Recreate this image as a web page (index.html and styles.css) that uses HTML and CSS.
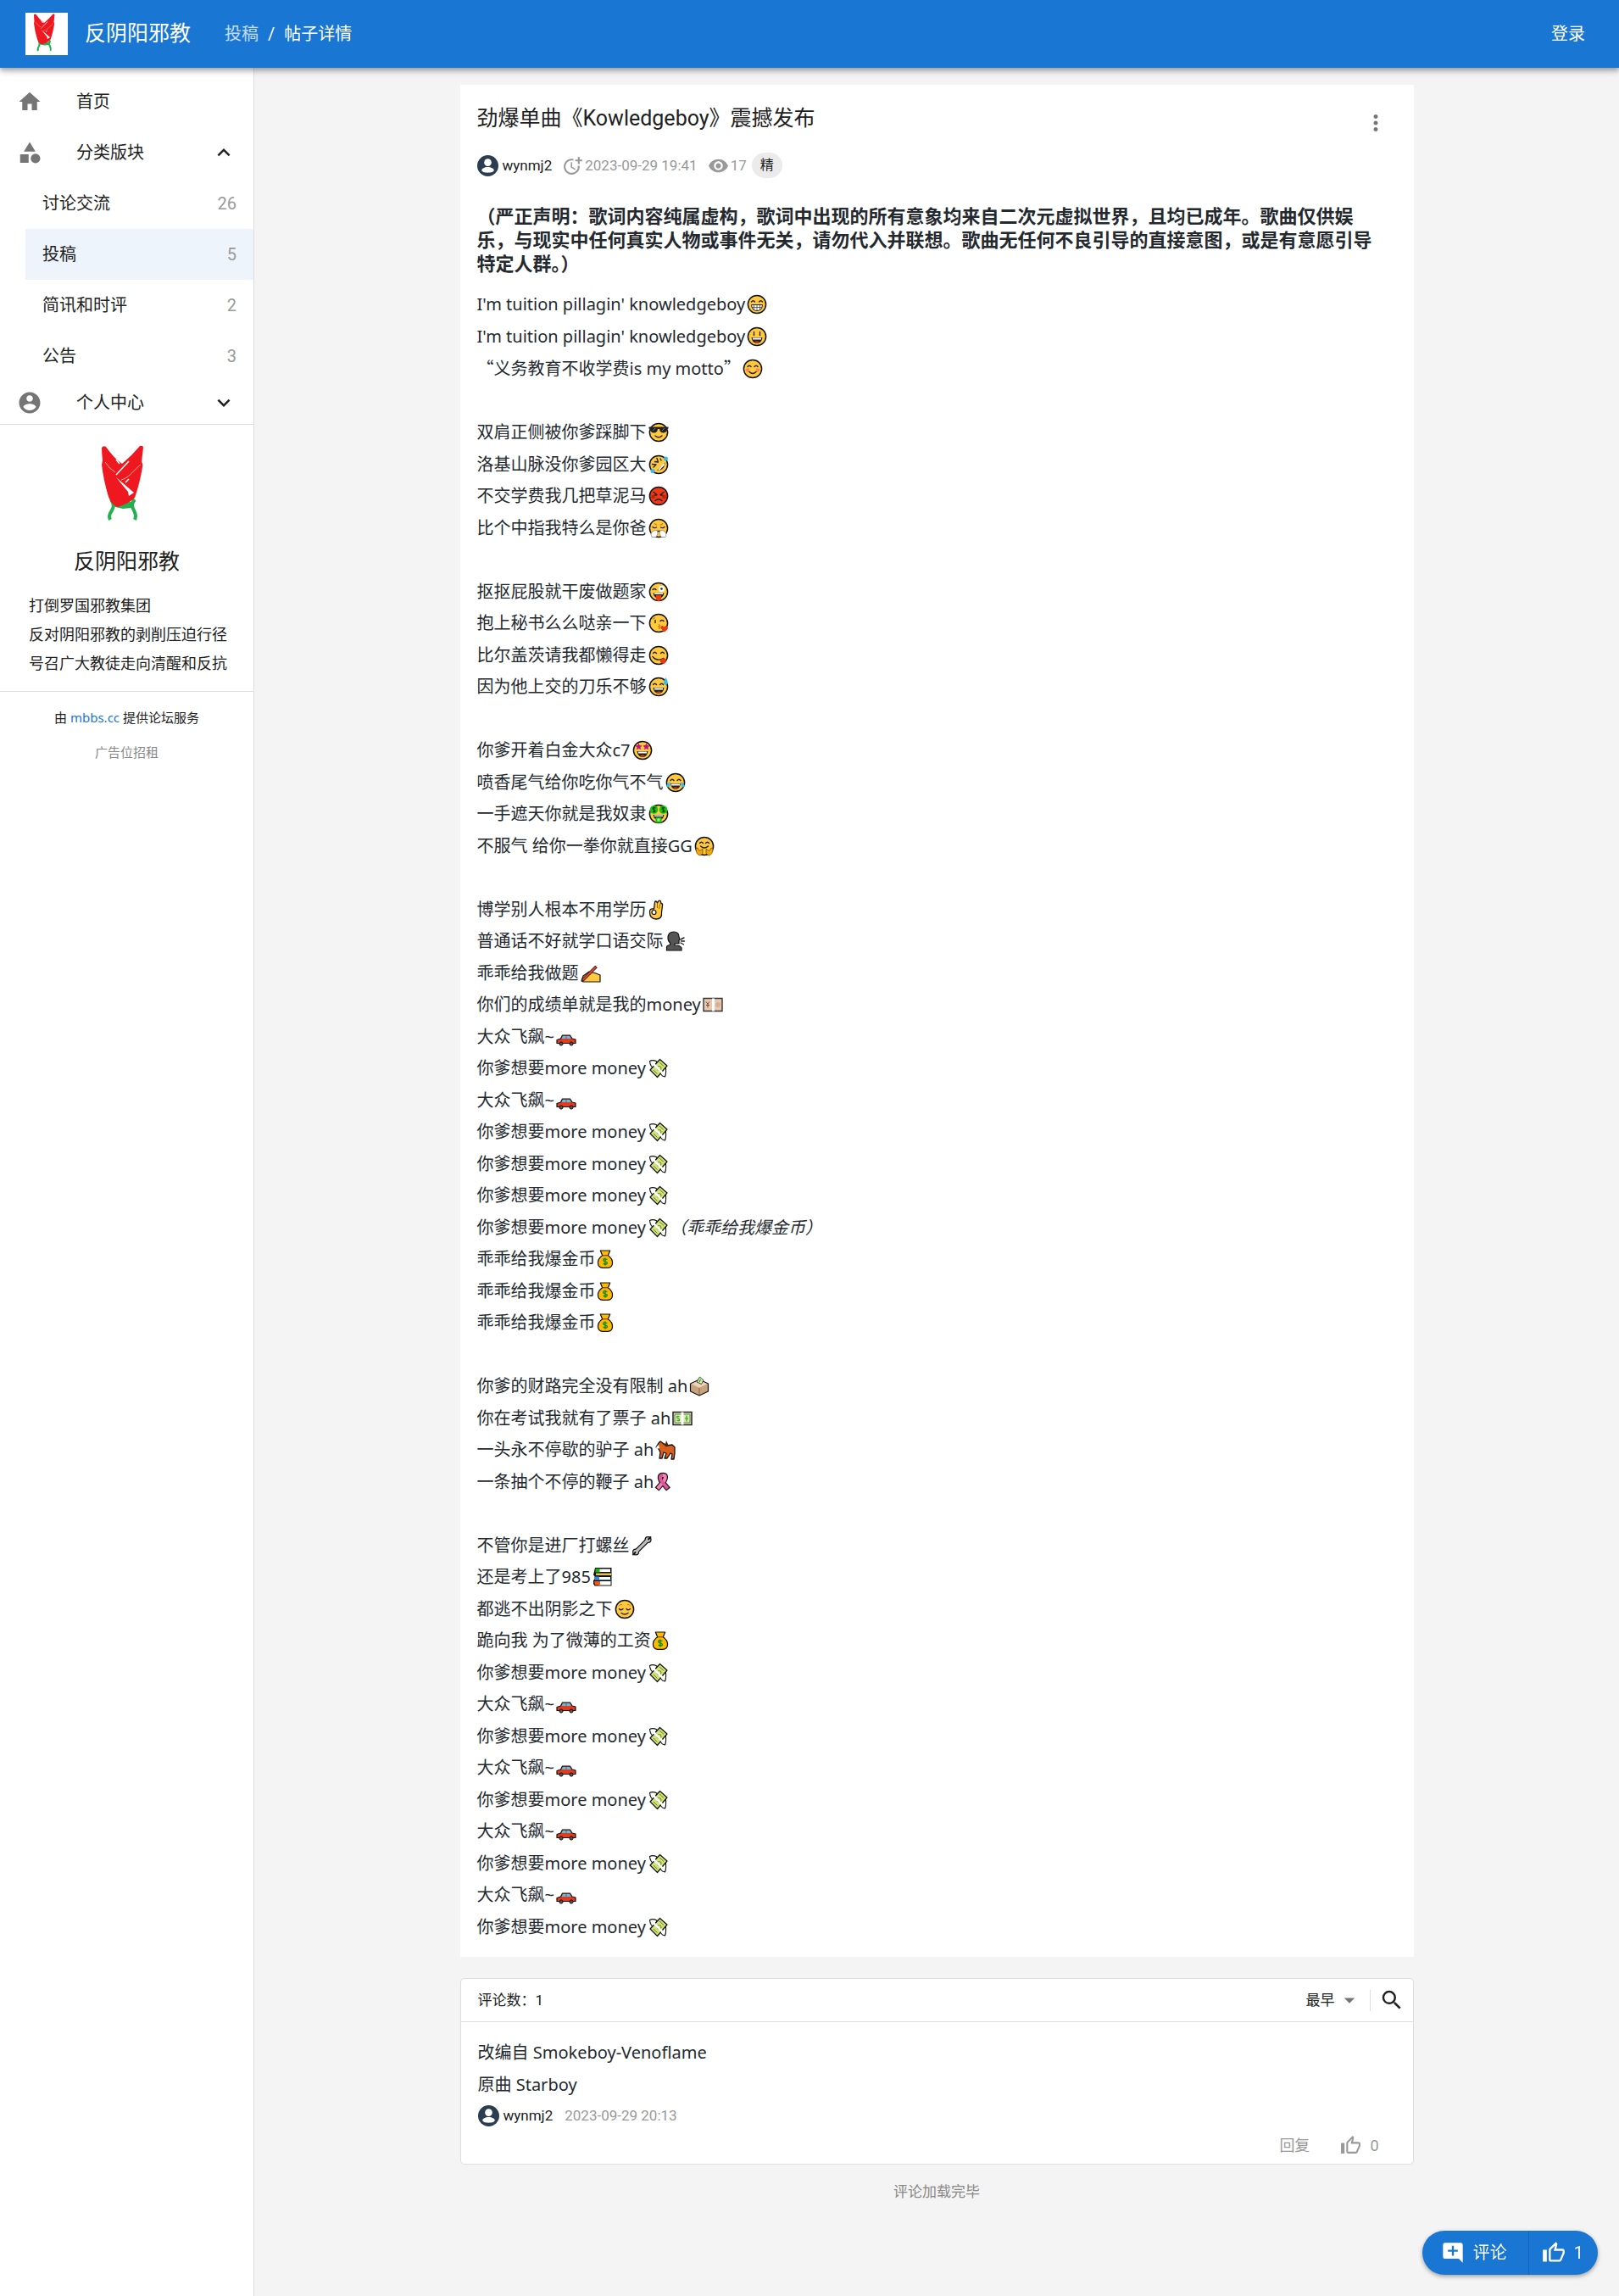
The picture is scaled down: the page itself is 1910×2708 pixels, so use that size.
FILE: index.html
```html
<!DOCTYPE html>
<html lang="zh-CN">
<head>
<meta charset="utf-8">
<meta name="viewport" content="width=device-width, initial-scale=1">
<title>劲爆单曲《Kowledgeboy》震撼发布 - 反阴阳邪教</title>
<link rel="stylesheet" href="styles.css">
</head>
<body>
<svg class="sprite" aria-hidden="true">
  <defs>
    <symbol id="logo" viewBox="0 0 100 100">
      <path fill="none" stroke="#22b14c" stroke-width="4" d="M31 66c3 5 4 8 1 13-3 4-4 7-2 11M59 66c-4 4-4 8-1 13 2 4 3 7 1 11"/>
      <path fill="#22b14c" d="M32 72l28-4-5 8-10 1-9-2z"/>
      <path fill="#f01820" d="M20 5q2-3 5-1 9 13 19 20Q55 15 65 3q4-1 4 2l-2 17q2 2 1 6-3 18-8 33-1 7-21 14-7-2-11-12Q22 43 20 25l1-5Q20 12 20 5z"/>
      <path fill="none" stroke="#fff" stroke-width="1.500" d="M52 21L37 37M37 19l4 5M48 46l4-4"/>
      <path fill="none" stroke="#fca" stroke-width=".8" d="M66 25C58 31 52 41 43 43M24 22q5 8 12 12"/>
      <path fill="#fff" d="M37 40l21 18-6 4-1-5z"/>
    </symbol>
    <symbol id="i-home" viewBox="0 0 24 24"><path d="M10 20v-6h4v6h5v-8h3L12 3 2 12h3v8z"/></symbol>
    <symbol id="i-category" viewBox="0 0 24 24"><path d="M12 2l-5.500 9h11zM3 13.500h8v8H3z"/><circle cx="17.500" cy="17.500" r="4.500"/></symbol>
    <symbol id="i-account" viewBox="0 0 24 24"><path d="M12 2C6.480 2 2 6.480 2 12s4.480 10 10 10 10-4.480 10-10S17.520 2 12 2zm0 3c1.660 0 3 1.340 3 3s-1.340 3-3 3-3-1.340-3-3 1.340-3 3-3zm0 14.200c-2.500 0-4.710-1.280-6-3.220.03-1.990 4-3.080 6-3.080 1.990 0 5.970 1.090 6 3.080-1.290 1.940-3.500 3.220-6 3.220z"/></symbol>
    <symbol id="i-less" viewBox="0 0 24 24"><path d="M12 8l-6 6 1.410 1.410L12 10.830l4.590 4.580L18 14z"/></symbol>
    <symbol id="i-more" viewBox="0 0 24 24"><path d="M16.590 8.590L12 13.170 7.410 8.590 6 10l6 6 6-6z"/></symbol>
    <symbol id="i-dots" viewBox="0 0 24 24"><path d="M12 8c1.100 0 2-.9 2-2s-.9-2-2-2-2 .9-2 2 .9 2 2 2zm0 2c-1.100 0-2 .9-2 2s.9 2 2 2 2-.9 2-2-.9-2-2-2zm0 6c-1.100 0-2 .9-2 2s.9 2 2 2 2-.9 2-2-.9-2-2-2z"/></symbol>
    <symbol id="i-moretime" viewBox="0 0 24 24"><path d="M10 8v6l4.700 2.900.8-1.200-4-2.400V8z"/><path d="M17.920 12A6.957 6.957 0 0 1 11 20c-3.900 0-7-3.100-7-7s3.100-7 7-7c.7 0 1.370.1 2 .29V4.230c-.64-.15-1.310-.23-2-.23-5 0-9 4-9 9s4 9 9 9a8.963 8.963 0 0 0 8.940-10z"/><path d="M20 5V2h-2v3h-3v2h3v3h2V7h3V5z"/></symbol>
    <symbol id="i-eye" viewBox="0 0 24 24"><path d="M12 4.500C7 4.500 2.730 7.610 1 12c1.730 4.390 6 7.500 11 7.500s9.270-3.110 11-7.500c-1.730-4.390-6-7.500-11-7.500zM12 17c-2.760 0-5-2.240-5-5s2.240-5 5-5 5 2.240 5 5-2.240 5-5 5zm0-8c-1.660 0-3 1.340-3 3s1.340 3 3 3 3-1.340 3-3-1.340-3-3-3z"/></symbol>
    <symbol id="i-arrow" viewBox="0 0 24 24"><path d="M7 10l5 5 5-5z"/></symbol>
    <symbol id="i-search" viewBox="0 0 24 24"><path d="M15.500 14h-.79l-.28-.27A6.471 6.471 0 0 0 16 9.500 6.500 6.500 0 1 0 9.500 16c1.610 0 3.090-.59 4.230-1.570l.27.28v.79l5 4.990L20.490 19l-4.990-5zm-6 0C7.010 14 5 11.990 5 9.500S7.010 5 9.500 5 14 7.010 14 9.500 11.990 14 9.500 14z"/></symbol>
    <symbol id="i-like" viewBox="0 0 24 24"><path d="M9 21h9c.83 0 1.540-.5 1.840-1.220l3.020-7.050c.09-.23.14-.47.14-.73v-2c0-1.100-.9-2-2-2h-6.310l.95-4.570.03-.32c0-.41-.17-.79-.44-1.060L14.170 1 7.580 7.590C7.220 7.950 7 8.450 7 9v10c0 1.100.9 2 2 2zM9 9l4.340-4.340L12 10h9v2l-3 7H9V9zM1 9h4v12H1z"/></symbol>
    <symbol id="i-addcomment" viewBox="0 0 24 24"><path d="M22 4c0-1.100-.9-2-2-2H4c-1.100 0-2 .9-2 2v12c0 1.100.9 2 2 2h14l4 4V4zm-5 7h-4v4h-2v-4H7V9h4V5h2v4h4v2z"/></symbol>
    <symbol id="avatar" viewBox="0 0 26 26"><circle cx="13" cy="13" r="13" fill="#2b3e51"/><circle cx="13" cy="9" r="4.500" fill="#fff"/><path fill="#fff" d="M13 14.500c4 0 7.500 1.800 7.500 4S17 21.500 13 21.500s-7.500-.8-7.500-3 3.500-4 7.500-4z"/></symbol>

    <symbol id="face" viewBox="0 0 24 24"><circle cx="12" cy="12" r="10.600" fill="#ffc83d" stroke="#111" stroke-width="1.500"/></symbol>
    <symbol id="e-grin" viewBox="0 0 24 24"><use href="#face"/><path class="ln" d="M5.500 9q2-2.500 4 0M14.500 9q2-2.500 4 0"/><path fill="#fff" stroke="#222" d="M5.500 12.500h13q-.5 7-6.500 7t-6.500-7z"/><path stroke="#444" stroke-width=".8" d="M6 15.500h12M8.500 13v5M12 13v6.500M15.500 13v5"/></symbol>
    <symbol id="e-smile" viewBox="0 0 24 24"><use href="#face"/><path class="ln" d="M8.500 6.500v4M15.500 6.500v4"/><path fill="#222" d="M5.500 13h13q-1 7-6.500 7t-6.500-7z"/><path fill="#fff" d="M7 13.500h10v2H7z"/><path fill="#f03a17" d="M9 18.500q3-2 6 0-3 2-6 0z"/></symbol>
    <symbol id="e-blush" viewBox="0 0 24 24"><use href="#face"/><circle cx="6" cy="13.500" r="2.300" fill="#ff8a50"/><circle cx="18" cy="13.500" r="2.300" fill="#ff8a50"/><path class="ln" d="M6 9.500q2-2.500 4 0M14 9.500q2-2.500 4 0M8 15.500q4 4 8 0"/></symbol>
    <symbol id="e-cool" viewBox="0 0 24 24"><use href="#face"/><path fill="#222" d="M.5 5.500h23v2l-1.500.5q-.5 4.500-4.500 4.500T13 8h-2q-.5 4.500-4.500 4.500T2 8L.5 7.500z"/><path stroke="#777" d="M5 10l3-3M16 10l3-3"/><path class="ln" d="M8 16q4 3.500 8 0"/></symbol>
    <symbol id="e-rofl" viewBox="0 0 24 24"><use href="#face"/><path class="ln" d="M10 4.500l1.500 4.500-4-.5M4.500 11.500l4.500.5-3 3M14 5l1 2"/><path fill="#222" d="M19.500 9.500q.5 9-9.500 9.500z"/><path fill="#fff" d="M18.500 10l.5 2.500-6 6-2-.3z"/><path fill="#f03a17" d="M17.500 16.500q-3-.5-3.500 2 2.500-.3 3.500-2z"/><circle cx="5" cy="19.500" r="2.500" fill="#36bdf0"/><circle cx="20.500" cy="5" r="2.500" fill="#36bdf0"/></symbol>
    <symbol id="e-rage" viewBox="0 0 24 24"><circle cx="12" cy="12" r="10.600" fill="#f03a17" stroke="#111" stroke-width="1.500"/><circle cx="5.500" cy="13" r="2.300" fill="#b8240b"/><circle cx="18.500" cy="13" r="2.300" fill="#b8240b"/><path class="ln" d="M6 7.500l4 3M18 7.500l-4 3M7.500 11h2M14.500 11h2M8 17.500q4-3.500 8 0"/></symbol>
    <symbol id="e-triumph" viewBox="0 0 24 24"><use href="#face"/><path class="ln" d="M5 10.500q2 2 4.500.5M19 10.500q-2 2-4.500.5M10 15.500h4"/><path stroke="#c47a10" fill="none" stroke-width="1.300" d="M7 6.500l3 2M17 6.500l-3 2"/><path fill="#fff" stroke="#555" stroke-width=".5" d="M10.500 15Q7 13.500 4 16.500 2 19 4 22.500h5q3-4 1.500-7.500zM13.500 15q3.500-1.500 6.500 1.500 2 2.500 0 6h-5q-3-4-1.500-7.500z"/></symbol>
    <symbol id="e-tongue" viewBox="0 0 24 24"><use href="#face"/><circle cx="15.500" cy="8.500" r="3.700" fill="#fff"/><circle cx="15.500" cy="8.500" r="1.300" fill="#222"/><path class="ln" d="M5 9.500q2-2 4 0"/><path fill="#222" d="M5.500 13.500h13q-1 6-6.500 6t-6.500-6z"/><path fill="#fff" d="M7 13.500h10v1.500H7z"/><path fill="#f03a17" d="M9 16h6v5q-3 4-6 0z"/></symbol>
    <symbol id="e-kiss" viewBox="0 0 24 24"><use href="#face"/><path class="ln" d="M8 8.500v3M14 9.500q2-2 4 0"/><path stroke="#c47a10" fill="none" stroke-width="1.200" d="M5 7.500q1-2 3-1.500M12 13.500q3 1.500 0 2.500 3 1.500 0 2.500"/><path fill="#f03a17" d="M19 22.500l-4.500-4.500q-.5-3 2-3l2 1.500q3-2.500 4.500.5.500 2-4 5.500z"/></symbol>
    <symbol id="e-yum" viewBox="0 0 24 24"><use href="#face"/><path class="ln" d="M5.500 9.500q2-2.500 4 0M14.500 9.500q2-2.500 4 0M5 13.500q5 6 13 2"/><path fill="#f03a17" d="M14 17l5-2q3 3 1 6-3 2-6-1z"/></symbol>
    <symbol id="e-sweat" viewBox="0 0 24 24"><use href="#face"/><path class="ln" d="M5.500 9.500q2-2.500 4 0M13.500 9.500q2-2.500 4 0"/><path fill="#222" d="M5.500 13h13q-1 7-6.500 7t-6.500-7z"/><path fill="#fff" d="M7 13.500h10v2H7z"/><path fill="#f03a17" d="M9 18.500q3-2 6 0-3 2-6 0z"/><path fill="#36bdf0" d="M20.500 1q3.500 6 1.500 8-2.500 1.500-4-.5-.5-2.500 2.500-7.500z"/></symbol>
    <symbol id="e-star" viewBox="0 0 24 24"><use href="#face"/><path id="st" fill="#c2108c" d="M7.500 3.500l1.200 2.600 2.800.3-2 2 .5 2.900-2.500-1.500L5 11.300l.5-2.900-2-2 2.800-.3z"/><use href="#st" x="9"/><path fill="#222" d="M5.500 13h13q-1 7-6.500 7t-6.500-7z"/><path fill="#fff" d="M7 13.500h10v2H7z"/><path fill="#f03a17" d="M9 18.500q3-2 6 0-3 2-6 0z"/></symbol>
    <symbol id="e-joy" viewBox="0 0 24 24"><use href="#face"/><path class="ln" d="M6 9.500q2-2.500 4 0M14 9.500q2-2.500 4 0"/><path fill="#222" d="M6 13h12q-1 7-6 7t-6-7z"/><path fill="#fff" d="M7 13.500h10v2H7z"/><path fill="#f03a17" d="M9 18.500q3-2 6 0-3 2-6 0z"/><path fill="#36bdf0" d="M5.500 11Q6 18 2.500 17.500-1 16 5.500 11zM18.500 11q-.5 7 3 6.500 3.500-1.500-3-6.500z"/></symbol>
    <symbol id="e-money" viewBox="0 0 24 24"><use href="#face"/><circle cx="6.500" cy="7" r="4.800" fill="#16c60c"/><circle cx="17.500" cy="7" r="4.800" fill="#16c60c"/><path id="dl" fill="none" stroke="#134d0e" stroke-width="1.100" d="M8.500 5q-3.500-1.500-3.500.5 0 1 1.500 1.500t1.500 1.500q0 2-3 .5M6.500 3.500v7"/><use href="#dl" x="11"/><path fill="#222" d="M5.500 13h13q-1 6-6.500 6t-6.500-6z"/><path fill="#fff" d="M7 13.500h10v1.500H7z"/><path fill="#16c60c" d="M8.500 16h7v6.500h-7z"/><path fill="#b8f0b0" d="M10.500 17.500h3v3h-3z"/></symbol>
    <symbol id="e-hug" viewBox="0 0 24 24"><use href="#face"/><path class="ln" d="M6.500 8.500q2-2.500 4 0M13.500 8.500q2-2.500 4 0M7.500 12q4.500 4 9 0"/><path fill="#f5a60a" stroke="#6b4300" stroke-width=".7" d="M2 15l2-1 2 3.500 4-2v5l-3 2.500Q2 22 2 15zM22 15l-2-1-2 3.500-4-2v5l3 2.500q5-1 5-8z"/></symbol>
    <symbol id="e-relieved" viewBox="0 0 24 24"><use href="#face"/><path class="ln" d="M5.500 11.500q2 2.500 4.500 0M14 11.500q2 2.500 4.500 0M8 16.500q4 3 8 0"/><path fill="none" stroke="#c47a10" d="M5 8.500q1.500-2.500 4-2M19 8.500q-1.500-2.500-4-2"/></symbol>
    <symbol id="e-ok" viewBox="0 0 18 24"><path fill="#ffc83d" stroke="#111" stroke-width="1.300" stroke-linejoin="round" d="M6.500 11L7.500 3q1-2 2.500 0l.5 1L12 1.500q2-1 2.500 1l.5 2q2 0 1.500 2.500L15.500 15q1 8-6.500 8-7.500-.5-7.500-8-.5-5 5-4z"/><path stroke="#8a5a00" stroke-width=".9" d="M10.500 4v6M14 4.500L12.500 11"/><circle cx="6.500" cy="15" r="2.500" fill="#fff" stroke="#111" stroke-width="1.200"/></symbol>
    <symbol id="e-speak" viewBox="0 0 24 24"><path fill="#555" stroke="#111" stroke-width="1.200" d="M1.500 23v-4q0-2 4-2.500V14Q3 12 3 8q0-7 7-7 6 0 6 6l1 3-1 1v4h-5v2q7 0 8 3v3z"/><path class="ln" d="M18 10l4-2M18.500 12h4M18 14l3.500 2"/></symbol>
    <symbol id="e-write" viewBox="0 0 24 24"><path fill="#ffc83d" stroke="#111" stroke-width="1.200" stroke-linejoin="round" d="M1 21l2-6 7-5 8 2 5 2v8H3z"/><path stroke="#111" stroke-width="3.600" d="M2 20.500L18.500 4"/><path stroke="#e8452c" stroke-width="2.200" d="M2.500 20L18 4.500"/></symbol>
    <symbol id="e-yen" viewBox="0 0 24 24"><path fill="#e8c9b0" stroke="#333" stroke-width="1.400" d="M1 4.500h22v15H1z"/><path fill="#fff" d="M11 4.500h3v15h-3z"/><path fill="none" stroke="#6b4a3a" stroke-width="1" d="M4 8.500l2 2.500 2-2.500M6 11v4.500M4 12.500h4"/><circle cx="18" cy="12" r="3" fill="#d9b095"/></symbol>
    <symbol id="e-car" viewBox="0 0 24 24"><path fill="#e8391b" stroke="#111" stroke-width="1.200" stroke-linejoin="round" d="M1 15.500l4.500-1.500 2-4h9l2.500 4 4 1v4.500H1z"/><path fill="#47c7f2" d="M6.500 14l1.500-3h3.500v3zM12.500 11h3.700l1.500 3h-5.200z"/><circle cx="6" cy="20" r="2.100" fill="#555" stroke="#111"/><circle cx="18" cy="20" r="2.100" fill="#555" stroke="#111"/></symbol>
    <symbol id="e-wings" viewBox="0 0 24 24"><path fill="#fff" stroke="#111" stroke-width="1.100" stroke-linejoin="round" d="M2.500 3.500Q6 1.500 11 4l-3 9q-5-3-5.500-9.500zM14 17q4 0 7-8 1.500 8-.5 13l-3-1z"/><path fill="#cfe37a" stroke="#111" stroke-width="1.200" stroke-linejoin="round" d="M14.500 1.500L23 9 11.500 22.500 3 14z"/><path fill="none" stroke="#6b8020" stroke-width="1" d="M14 5l5 4.500M7 14l4.500 4.500"/><circle cx="13.500" cy="12" r="2.500" fill="none" stroke="#6b8020"/><path stroke="#fff" stroke-width="2.600" d="M6.500 6.500L18 18"/></symbol>
    <symbol id="e-bag" viewBox="0 0 21 24"><path fill="#ffb900" stroke="#111" stroke-width="1.300" stroke-linejoin="round" d="M4.500 1.500h12l-2.500 6q5.500 4 5.500 9 0 6-6 6.500h-6q-6-.5-6-6.500 0-5 5.500-9z"/><path stroke="#7a4a00" stroke-width="1.300" d="M7 7.500h7"/><path fill="none" stroke="#0f8f10" stroke-width="1.500" d="M13 12.500q-5-2-5 .7 0 1.200 2.500 1.800 2.500.6 2.500 1.800 0 2.700-5 .7M10.500 10.500v9.500"/></symbol>
    <symbol id="e-ballot" viewBox="0 0 24 24"><path fill="#c9a27e" stroke="#111" stroke-width="1.200" stroke-linejoin="round" d="M1.500 9L12 4l10.500 5v9L12 23 1.500 18z"/><path fill="#ecd3b8" d="M2.500 9.300L12 5l9.500 4.300L12 13.700z"/><path stroke="#8a6545" d="M12 14v8"/><path fill="#d9efb0" stroke="#333" stroke-width=".9" d="M9 7l3.500-6L17 5l-2.500 4.500z"/><path stroke="#16a010" stroke-width="1.200" d="M12 7l1.500-3"/></symbol>
    <symbol id="e-dollar" viewBox="0 0 24 24"><path fill="#d5eab0" stroke="#222" stroke-width="1.500" d="M1 4.500h22v15H1z"/><path fill="none" stroke="#6d7f55" d="M3 7h18v10H3z"/><path fill="#fff" d="M10.500 4.500h3v15h-3z"/><path fill="none" stroke="#3a9d20" stroke-width="1.200" d="M8.500 10q-3-1.500-3 .5 0 1 1.500 1.500t1.500 1.500q0 2-3 .5M17 8.500v7M15 12h4"/></symbol>
    <symbol id="e-horse" viewBox="0 0 24 24"><path fill="#d95f1e" stroke="#111" stroke-width="1.300" stroke-linejoin="round" d="M1 9l3-5 2-2 3 2 5 3 6-1 3 3v7l-1 7h-3l1-6-2-1-4 6h-3l2-6-3-1-2 7H5l1-7-2-4z"/><path fill="#4a2410" d="M7 3.500l5 1.500 1-4 2.500 5.500L13 8.500z"/><path fill="#fff" d="M1 9l3-3 1 4-3 1z"/></symbol>
    <symbol id="e-ribbon" viewBox="0 0 20 24"><path fill="none" stroke="#111" stroke-width="6.400" d="M3 20.500l8.500-10Q15 4 10 4T8 10.500l8.500 10"/><path fill="none" stroke="#f283b6" stroke-width="4" d="M3.800 19.600l7.700-9.100Q15 4 10 4"/><path fill="none" stroke="#e0569b" stroke-width="4" d="M10 4Q5 4 8 10.500l7.700 9.100"/></symbol>
    <symbol id="e-wrench" viewBox="0 0 24 24"><g fill="none" stroke-linecap="round"><path stroke="#111" stroke-width="5.600" d="M5 19.500L19 5.500"/><path stroke="#111" stroke-width="8" d="M5 19.500h.1M19.500 5h.1"/><path stroke="#bdbdbd" stroke-width="3.200" d="M5 19.500L19 5.500"/><path stroke="#bdbdbd" stroke-width="5.600" d="M5 19.500h.1M19.500 5h.1"/><path stroke="#111" stroke-width="1.800" d="M2 22.500l2.500-2.500M22.500 2L20 4.500"/></g></symbol>
    <symbol id="e-books" viewBox="0 0 24 24"><path fill="#111" d="M3 1h19.500v21.500H2.500L1 20v-4l1.500-1.500V11L1 9.500z"/><path fill="#fff" d="M8 2.500h13V6H8zM8 12h13v3H8zM7 17h14.500v4.500H7z"/><path fill="#16b010" d="M3.500 2h5v4.500h-5z"/><path fill="#e5c34b" d="M4 7.500h18v2.500H4z"/><path fill="#2f86e0" d="M3 11.500h5V15H22v.8H3z"/><path fill="#f05a10" d="M2 17h7v4.500H3z"/></symbol>
  </defs>
</svg>

<header class="topbar">
  <a class="topbar-brand" href="#"><span class="topbar-logo"><svg><use href="#logo"/></svg></span><span>反阴阳邪教</span></a>
  <nav class="crumbs" aria-label="面包屑"><a href="#">投稿</a><span>/</span><strong>帖子详情</strong></nav>
  <button class="login" type="button">登录</button>
</header>

<div class="layout">
  <aside class="sidebar">
    <nav class="menu">
      <a class="menu-item" href="#"><svg class="icon"><use href="#i-home"/></svg><span>首页</span></a>
      <button class="menu-item" type="button" aria-expanded="true"><svg class="icon"><use href="#i-category"/></svg><span>分类版块</span><svg class="icon chevron"><use href="#i-less"/></svg></button>
      <div class="submenu">
        <a href="#"><span>讨论交流</span><span class="count">26</span></a>
        <a href="#" class="active" aria-current="page"><span>投稿</span><span class="count">5</span></a>
        <a href="#"><span>简讯和时评</span><span class="count">2</span></a>
        <a href="#"><span>公告</span><span class="count">3</span></a>
      </div>
      <button class="menu-item compact" type="button" aria-expanded="false"><svg class="icon"><use href="#i-account"/></svg><span>个人中心</span><svg class="icon chevron"><use href="#i-more"/></svg></button>
    </nav>
    <section class="about">
      <svg class="about-logo"><use href="#logo"/></svg>
      <h2>反阴阳邪教</h2>
      <p>打倒罗国邪教集团<br>反对阴阳邪教的剥削压迫行径<br>号召广大教徒走向清醒和反抗</p>
    </section>
    <section class="powered">
      <p>由 <a href="#">mbbs.cc</a> 提供论坛服务</p>
      <p class="muted">广告位招租</p>
    </section>
  </aside>

  <main class="content">
    <article class="post">
      <div class="post-head">
        <h1>劲爆单曲《Kowledgeboy》震撼发布</h1>
        <button class="icon-button" type="button" aria-label="更多"><svg><use href="#i-dots"/></svg></button>
      </div>
      <div class="meta">
        <a class="user" href="#"><svg><use href="#avatar"/></svg>wynmj2</a>
        <span class="stat"><svg><use href="#i-moretime"/></svg>2023-09-29 19:41</span>
        <span class="stat views"><svg><use href="#i-eye"/></svg>17</span>
        <span class="chip">精</span>
      </div>
      <div class="markdown">
        <h3>（严正声明：歌词内容纯属虚构，歌词中出现的所有意象均来自二次元虚拟世界，且均已成年。歌曲仅供娱<br>乐，与现实中任何真实人物或事件无关，请勿代入并联想。歌曲无任何不良引导的直接意图，或是有意愿引导<br>特定人群。）</h3>
        <p>I'm tuition pillagin' knowledgeboy<svg class="emoji" role="img" aria-label="😁"><use href="#e-grin"/></svg><br>
        I'm tuition pillagin' knowledgeboy<svg class="emoji" role="img" aria-label="😃"><use href="#e-smile"/></svg><br>
        <span class="cjk">“义务教育不收学费</span>is my motto<span class="cjk">”</span><svg class="emoji" role="img" aria-label="😊"><use href="#e-blush"/></svg><br>
        <br>
        双肩正侧被你爹踩脚下<svg class="emoji" role="img" aria-label="😎"><use href="#e-cool"/></svg><br>
        洛基山脉没你爹园区大<svg class="emoji" role="img" aria-label="🤣"><use href="#e-rofl"/></svg><br>
        不交学费我几把草泥马<svg class="emoji" role="img" aria-label="😡"><use href="#e-rage"/></svg><br>
        比个中指我特么是你爸<svg class="emoji" role="img" aria-label="😤"><use href="#e-triumph"/></svg><br>
        <br>
        抠抠屁股就干废做题家<svg class="emoji" role="img" aria-label="😜"><use href="#e-tongue"/></svg><br>
        抱上秘书么么哒亲一下<svg class="emoji" role="img" aria-label="😘"><use href="#e-kiss"/></svg><br>
        比尔盖茨请我都懒得走<svg class="emoji" role="img" aria-label="😋"><use href="#e-yum"/></svg><br>
        因为他上交的刀乐不够<svg class="emoji" role="img" aria-label="😅"><use href="#e-sweat"/></svg><br>
        <br>
        你爹开着白金大众c7<svg class="emoji" role="img" aria-label="🤩"><use href="#e-star"/></svg><br>
        喷香尾气给你吃你气不气<svg class="emoji" role="img" aria-label="😂"><use href="#e-joy"/></svg><br>
        一手遮天你就是我奴隶<svg class="emoji" role="img" aria-label="🤑"><use href="#e-money"/></svg><br>
        不服气 给你一拳你就直接GG<svg class="emoji" role="img" aria-label="🤗"><use href="#e-hug"/></svg><br>
        <br>
        博学别人根本不用学历<svg class="emoji slim" role="img" aria-label="👌"><use href="#e-ok"/></svg><br>
        普通话不好就学口语交际<svg class="emoji" role="img" aria-label="🗣"><use href="#e-speak"/></svg><br>
        乖乖给我做题<svg class="emoji" role="img" aria-label="✍"><use href="#e-write"/></svg><br>
        你们的成绩单就是我的money<svg class="emoji" role="img" aria-label="💴"><use href="#e-yen"/></svg><br>
        大众飞飙~<svg class="emoji" role="img" aria-label="🚗"><use href="#e-car"/></svg><br>
        你爹想要more money<svg class="emoji" role="img" aria-label="💸"><use href="#e-wings"/></svg><br>
        大众飞飙~<svg class="emoji" role="img" aria-label="🚗"><use href="#e-car"/></svg><br>
        你爹想要more money<svg class="emoji" role="img" aria-label="💸"><use href="#e-wings"/></svg><br>
        你爹想要more money<svg class="emoji" role="img" aria-label="💸"><use href="#e-wings"/></svg><br>
        你爹想要more money<svg class="emoji" role="img" aria-label="💸"><use href="#e-wings"/></svg><br>
        你爹想要more money<svg class="emoji" role="img" aria-label="💸"><use href="#e-wings"/></svg><em>（乖乖给我爆金币）</em><br>
        乖乖给我爆金币<svg class="emoji slim" role="img" aria-label="💰"><use href="#e-bag"/></svg><br>
        乖乖给我爆金币<svg class="emoji slim" role="img" aria-label="💰"><use href="#e-bag"/></svg><br>
        乖乖给我爆金币<svg class="emoji slim" role="img" aria-label="💰"><use href="#e-bag"/></svg><br>
        <br>
        你爹的财路完全没有限制 ah<svg class="emoji" role="img" aria-label="🗳"><use href="#e-ballot"/></svg><br>
        你在考试我就有了票子 ah<svg class="emoji" role="img" aria-label="💵"><use href="#e-dollar"/></svg><br>
        一头永不停歇的驴子 ah<svg class="emoji" role="img" aria-label="🐎"><use href="#e-horse"/></svg><br>
        一条抽个不停的鞭子 ah<svg class="emoji slim" role="img" aria-label="🎗"><use href="#e-ribbon"/></svg><br>
        <br>
        不管你是进厂打螺丝<svg class="emoji" role="img" aria-label="🔧"><use href="#e-wrench"/></svg><br>
        还是考上了985<svg class="emoji" role="img" aria-label="📚"><use href="#e-books"/></svg><br>
        都逃不出阴影之下<svg class="emoji" role="img" aria-label="😌"><use href="#e-relieved"/></svg><br>
        跪向我 为了微薄的工资<svg class="emoji slim" role="img" aria-label="💰"><use href="#e-bag"/></svg><br>
        你爹想要more money<svg class="emoji" role="img" aria-label="💸"><use href="#e-wings"/></svg><br>
        大众飞飙~<svg class="emoji" role="img" aria-label="🚗"><use href="#e-car"/></svg><br>
        你爹想要more money<svg class="emoji" role="img" aria-label="💸"><use href="#e-wings"/></svg><br>
        大众飞飙~<svg class="emoji" role="img" aria-label="🚗"><use href="#e-car"/></svg><br>
        你爹想要more money<svg class="emoji" role="img" aria-label="💸"><use href="#e-wings"/></svg><br>
        大众飞飙~<svg class="emoji" role="img" aria-label="🚗"><use href="#e-car"/></svg><br>
        你爹想要more money<svg class="emoji" role="img" aria-label="💸"><use href="#e-wings"/></svg><br>
        大众飞飙~<svg class="emoji" role="img" aria-label="🚗"><use href="#e-car"/></svg><br>
        你爹想要more money<svg class="emoji" role="img" aria-label="💸"><use href="#e-wings"/></svg></p>
      </div>
    </article>

    <section class="comments">
      <div class="comments-head">
        <span>评论数：1</span>
        <div class="comments-tools">
          <label class="sort"><select aria-label="排序"><option>最早</option><option>最新</option></select><svg><use href="#i-arrow"/></svg></label>
          <button class="search" type="button" aria-label="搜索"><svg><use href="#i-search"/></svg></button>
        </div>
      </div>
      <article class="comment">
        <div class="markdown"><p>改编自 Smokeboy-Venoflame<br>原曲 Starboy</p></div>
        <div class="meta">
          <a class="user" href="#"><svg><use href="#avatar"/></svg>wynmj2</a>
          <span class="stat">2023-09-29 20:13</span>
        </div>
        <div class="actions">
          <button type="button">回复</button>
          <button type="button" aria-label="赞 0"><svg><use href="#i-like"/></svg>0</button>
        </div>
      </article>
    </section>
    <p class="end">评论加载完毕</p>
  </main>
</div>

<div class="fab">
  <button type="button"><svg><use href="#i-addcomment"/></svg>评论</button>
  <button type="button" aria-label="赞 1"><svg><use href="#i-like"/></svg>1</button>
</div>
</body>
</html>
```
FILE: styles.css
```css
* { box-sizing: border-box; }

body {
  margin: 0;
  background: #f4f4f4;
  color: #212121;
  font-family: Roboto, "Noto Sans CJK SC", sans-serif;
  font-size: 20px;
  line-height: 30px;
}

h1, h2, h3, p { margin: 0; font-weight: 400; }
a { color: inherit; text-decoration: none; }
button, select {
  border: 0;
  padding: 0;
  margin: 0;
  background: none;
  color: inherit;
  font: inherit;
  cursor: pointer;
}
svg { fill: currentColor; flex: none; }
.sprite { position: absolute; width: 0; height: 0; }
.ln { fill: none; stroke: #222; stroke-width: 1.4; stroke-linecap: round; stroke-linejoin: round; }

/* Top bar */
.topbar {
  position: sticky;
  top: 0;
  z-index: 2;
  display: flex;
  align-items: center;
  height: 80px;
  padding: 0 40px 0 30px;
  background: #1976d2;
  color: #fff;
  box-shadow: 0 2px 5px rgba(0, 0, 0, .2), 0 5px 6px rgba(0, 0, 0, .14), 0 1px 12px rgba(0, 0, 0, .12);
}
.topbar-brand { display: flex; align-items: center; gap: 20px; font-size: 25px; }
.topbar-logo { width: 50px; height: 50px; background: #fff; }
.topbar-logo svg { display: block; width: 50px; height: 50px; }
.crumbs { display: flex; gap: 10px; margin-left: 40px; }
.crumbs a { opacity: .75; }
.crumbs strong { font-weight: 400; }
.crumbs span { padding: 0 1px; }
.login { margin-left: auto; }

/* Page layout */
.layout { display: flex; min-height: calc(100vh - 80px); }
.sidebar { flex: none; width: 300px; background: #fff; border-right: 1px solid #dedede; }
.content { flex: 1; min-width: 0; padding: 20px; }

/* Sidebar */
.menu { padding-top: 10px; border-bottom: 1px solid #dedede; }
.menu-item { display: flex; align-items: center; width: 100%; height: 60px; padding: 0 20px; text-align: left; }
.menu-item span { margin-left: 40px; }
.menu-item.compact { height: 50px; }
.icon { width: 30px; height: 30px; color: #757575; }
.chevron { margin-left: auto; color: #212121; }
.submenu { padding-left: 30px; }
.submenu a { display: flex; align-items: center; justify-content: space-between; height: 60px; padding: 0 20px; }
.submenu .active { background: #edf4fc; }
.count { color: #999; }

.about { padding: 22px 30px 15px; border-bottom: 1px solid #dedede; }
.about-logo { display: block; width: 100px; height: 100px; margin: 0 auto 20px; }
.about h2 { font-size: 25px; line-height: 40px; text-align: center; margin-bottom: 15px; }
.about p { padding-left: 4px; font-size: 18px; line-height: 34px; white-space: nowrap; }

.powered { display: grid; gap: 16px; padding-top: 18px; text-align: center; font-family: "Noto Sans", "Noto Sans CJK SC", sans-serif; font-size: 15px; line-height: 25px; }
.powered a { color: #1976d2; }
.muted { color: #888; }

/* Post */
.post { max-width: 1125px; margin: 0 auto; padding: 20px 20px 17px; background: #fff; }
.post-head { display: flex; align-items: flex-start; justify-content: space-between; height: 50px; }
.post-head h1 { font-size: 25px; line-height: 40px; }
.icon-button { display: flex; padding: 10px; }
.icon-button svg { width: 30px; height: 30px; color: #757575; }
.meta { display: flex; align-items: center; gap: 12px; font-size: 17px; line-height: 30px; }
.meta svg { width: 25px; height: 25px; }
.user, .stat { display: flex; align-items: center; gap: 5px; }
.stat { gap: 2px; color: #999; }
.post .meta { height: 50px; }
.chip { padding: 0 10px; margin-left: -6px; border-radius: 15px; background: #ebebeb; font-size: 16px; }

.markdown { color: #24292f; font-family: "Noto Sans", "Noto Sans CJK SC", sans-serif; line-height: 1.875; }
.markdown h3 { margin: 19px 0 17px; font-size: 22px; line-height: 28px; font-weight: 700; font-family: "Noto Sans CJK SC", sans-serif; white-space: nowrap; }
.cjk { font-family: "Noto Sans CJK SC", sans-serif; }
.emoji { width: 24px; height: 24px; margin: 0 2px; vertical-align: -5px; }
.emoji.slim { width: 20px; margin: 0 1px; }

/* Comments */
.comments { max-width: 1125px; margin: 25px auto 0; border: 1px solid #dedede; border-radius: 5px; background: #fff; }
.comments-head { display: flex; align-items: center; justify-content: space-between; height: 51px; padding: 0 10px 0 20px; border-bottom: 1px solid #dedede; font-size: 17px; }
.comments-tools { display: flex; align-items: center; }
.sort { display: flex; align-items: center; margin-right: 9px; }
.sort select { appearance: none; width: 36px; }
.sort svg { width: 30px; height: 30px; color: #757575; }
.search { display: flex; height: 25px; align-items: center; padding-left: 10px; border-left: 1px solid #dedede; }
.search svg { width: 30px; height: 30px; }
.comment { padding: 17px 20px 4px; }
.comment .meta { height: 36px; gap: 14px; }
.actions { display: flex; justify-content: flex-end; gap: 36px; height: 35px; padding-right: 20px; color: #999; font-size: 18px; }
.actions button { display: flex; align-items: center; gap: 10px; }
.actions svg { width: 25px; height: 25px; }
.end { padding-top: 17px; text-align: center; color: #888; font-size: 17px; }

/* Floating actions */
.fab { position: fixed; right: 25px; bottom: 25px; display: flex; height: 52px; border-radius: 26px; overflow: hidden; background: #1976d2; color: #fff; box-shadow: 0 2px 5px rgba(0, 0, 0, .35); }
.fab button { display: flex; align-items: center; gap: 10px; padding: 0 17px 0 15px; }
.fab button:first-child { padding: 0 25px 0 22px; border-right: 1px solid #1565c0; }
.fab svg { width: 28px; height: 28px; }
```
